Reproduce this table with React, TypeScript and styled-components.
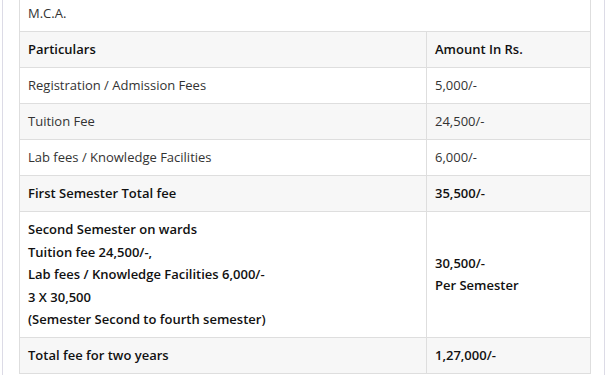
import React from 'react';
import styled, { createGlobalStyle } from 'styled-components';

const GlobalStyle = createGlobalStyle`
    html, body {
        margin: 0;
        padding: 0;
        background: #fff;
        overflow: hidden;
    }
    body {
        font-family: 'Open Sans', 'Liberation Sans', sans-serif;
        font-size: 13px;
        color: #333;
    }
`;

const Panel = styled.div`
    margin: -5px 0 0 2px;
    width: 603px;
    padding: 0 15px 10px 16px;
    box-sizing: border-box;
    border-left: 1px solid #dcdbe6;
    border-right: 1px solid #dcdbe6;
`;

const FeeTable = styled.table`
    width: 572px;
    border-collapse: collapse;
    table-layout: fixed;
    border: 1px solid #dedede;

    tr:nth-child(even) td {
        background: #f7f7f7;
    }
`;

const Cell = styled.td<{ $bold?: boolean }>`
    border: 1px solid #dedede;
    padding: 6px 8px 6.5px;
    line-height: 22.5px;
    vertical-align: middle;
    font-weight: ${(p) => (p.$bold ? 600 : 400)};
    color: ${(p) => (p.$bold ? '#111' : '#333')};
`;

const Line = styled.div``;

interface Row {
    label: string;
    amount: string;
    bold?: boolean;
}

const rows: Row[] = [
    { label: 'Particulars', amount: 'Amount In Rs.', bold: true },
    { label: 'Registration / Admission Fees', amount: '5,000/-' },
    { label: 'Tuition Fee', amount: '24,500/-' },
    { label: 'Lab fees / Knowledge Facilities', amount: '6,000/-' },
    { label: 'First Semester Total fee', amount: '35,500/-', bold: true },
];

const secondSemester = [
    'Second Semester on wards',
    'Tuition fee 24,500/-,',
    'Lab fees / Knowledge Facilities 6,000/-',
    '3 X 30,500',
    '(Semester Second to fourth semester)',
];

const App: React.FC = () => {
    return (
        <>
            <GlobalStyle />
            <Panel>
                <FeeTable>
                    <colgroup>
                        <col style={{ width: 407 }} />
                        <col />
                    </colgroup>
                    <tbody>
                        <tr>
                            <Cell colSpan={2}>M.C.A.</Cell>
                        </tr>
                        {rows.map((r) => (
                            <tr key={r.label}>
                                <Cell $bold={r.bold}>{r.label}</Cell>
                                <Cell $bold={r.bold}>{r.amount}</Cell>
                            </tr>
                        ))}
                        <tr>
                            <Cell $bold>
                                {secondSemester.map((l) => (
                                    <Line key={l}>{l}</Line>
                                ))}
                            </Cell>
                            <Cell $bold>
                                <Line>30,500/-</Line>
                                <Line>Per Semester</Line>
                            </Cell>
                        </tr>
                        <tr>
                            <Cell $bold>Total fee for two years</Cell>
                            <Cell $bold>1,27,000/-</Cell>
                        </tr>
                    </tbody>
                </FeeTable>
            </Panel>
        </>
    );
};

export default App;
